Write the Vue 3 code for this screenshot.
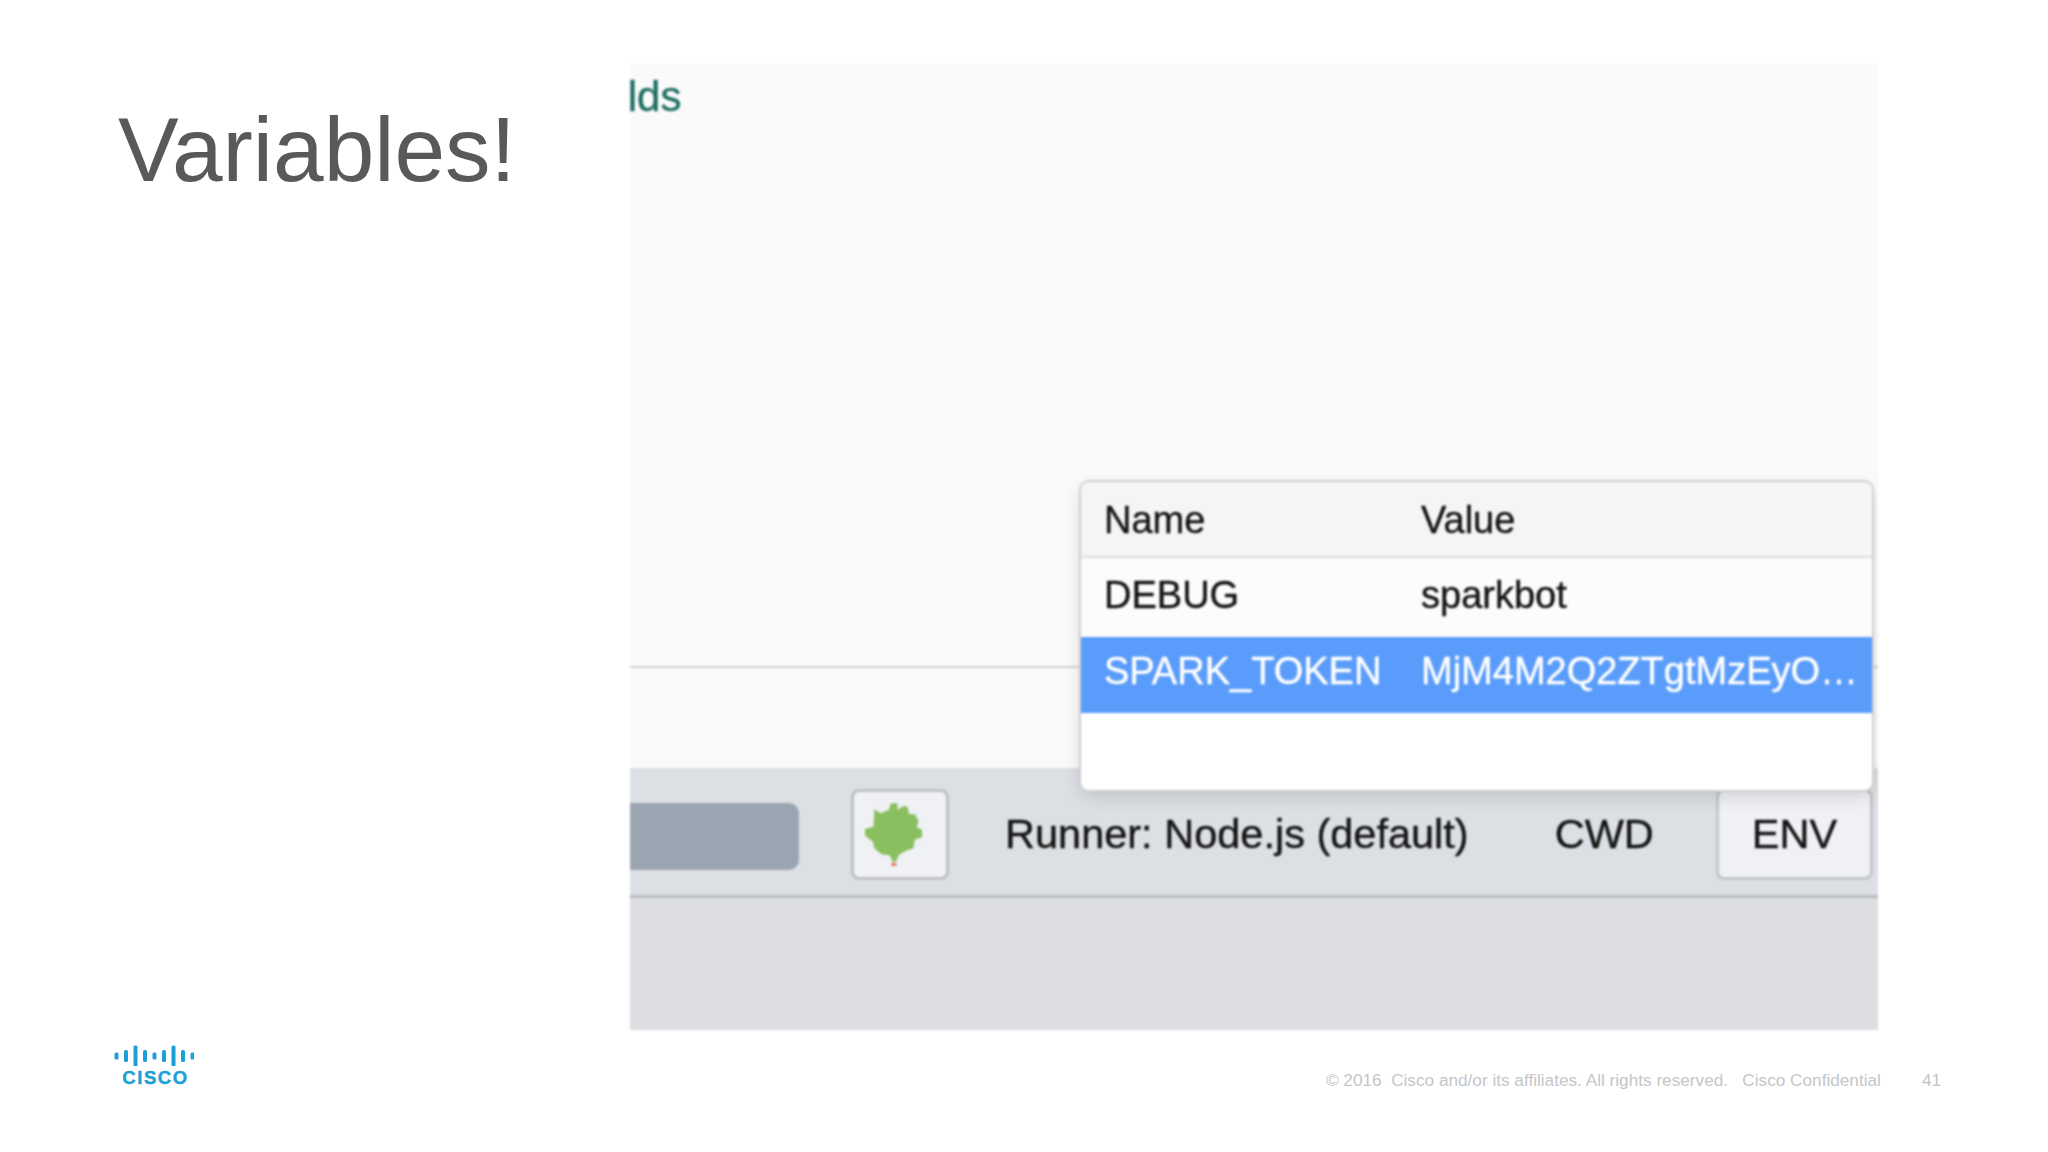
<template>
  <div class="slide">
    <div class="slide__side">
      <h1 class="slide__title">Variables!</h1>
    </div>

    <div class="shot">
      <div class="shot__log">
        <span class="shot__builds">Builds</span>
      </div>
      <div class="shot__spacer"></div>

      <div class="toolbar">
        <div class="toolbar__progress"></div>
        <button class="toolbar__tree" type="button" aria-label="Tree">
          <svg class="tree" viewBox="78 70 172 192" aria-hidden="true">
            <polygon
              fill="#8abf60"
              points="156,70 176,70 176,90 196,78 208,82 210,102 230,104 240,126 234,142 252,152 252,172 228,180 224,206 200,214 180,226 172,246 160,246 154,228 128,224 106,206 102,186 78,168 78,148 104,140 106,88 126,100 150,90"
            />
            <rect x="157" y="250" width="16" height="9" fill="#e0775a" />
          </svg>
        </button>
        <span class="toolbar__runner">Runner: Node.js (default)</span>
        <span class="toolbar__cwd">CWD</span>
        <button class="toolbar__env" type="button">ENV</button>
      </div>
      <div class="shot__bottom"></div>

      <div class="popup">
        <div class="popup__row popup__row--head">
          <span>Name</span>
          <span>Value</span>
        </div>
        <div
          v-for="row in envVars"
          :key="row.name"
          :class="['popup__row', { 'popup__row--active': row.active }]"
        >
          <span>{{ row.name }}</span>
          <span>{{ row.value }}</span>
        </div>
      </div>
    </div>

    <div class="slide__rest"></div>

    <footer class="footer">
      <div class="logo">
        <svg class="logo__bars" viewBox="0 0 80 22" aria-hidden="true">
          <rect
            v-for="(bar, i) in logoBars"
            :key="i"
            :x="i * 9.5 + 0.5"
            :y="12 - bar / 2"
            width="4"
            :height="bar"
            rx="1.5"
            fill="#1ba0d7"
          />
        </svg>
        <span class="logo__word">CISCO</span>
      </div>
      <div class="footer__legal">
        <span>© 2016&nbsp; Cisco and/or its affiliates. All rights reserved. &nbsp; Cisco Confidential</span>
        <span class="footer__page">41</span>
      </div>
    </footer>
  </div>
</template>

<script setup>
const envVars = [
  { name: 'DEBUG', value: 'sparkbot' },
  { name: 'SPARK_TOKEN', value: 'MjM4M2Q2ZTgtMzEyO…', active: true },
];

const logoBars = [7, 12, 21, 12, 7, 12, 21, 12, 7];
</script>

<style>
html,
body {
  margin: 0;
  background: #fff;
}
</style>

<style scoped>
.slide {
  width: 2048px;
  height: 1152px;
  padding-top: 64px;
  box-sizing: border-box;
  display: grid;
  grid-template-columns: 630px 1248px 1fr;
  grid-template-rows: 966px 1fr;
  overflow: hidden;
  background: #fff;
  font-family: 'Liberation Sans', Arial, sans-serif;
}

.slide__side {
  padding: 33px 0 0 118px;
}

.slide__title {
  margin: 0;
  font-size: 91px;
  line-height: 105px;
  font-weight: 400;
  color: #58595b;
}

.shot {
  position: relative;
  display: flex;
  flex-direction: column;
  overflow: hidden;
  background: #fbfafb;
  color: #141414;
  filter: blur(0.9px);
  -webkit-text-stroke: 0.4px currentColor;
}

.shot__log {
  height: 602px;
  flex: none;
  overflow: hidden;
  border-bottom: 2px solid #d4d3d3;
}

.shot__builds {
  display: block;
  margin: 11px 0 0 -63px;
  font-size: 42px;
  line-height: 44px;
  color: #1f6f62;
}

.shot__spacer {
  flex: 1;
}

.toolbar {
  height: 127px;
  flex: none;
  display: flex;
  align-items: center;
  background: #dcdfe3;
  border-bottom: 3px solid #b9bcc0;
  font-size: 41.5px;
}

.toolbar__progress {
  width: 169px;
  height: 67px;
  margin-top: 10px;
  background: #9ba5b1;
  border-radius: 0 10px 10px 0;
}

.toolbar__tree {
  width: 98px;
  height: 91px;
  margin: 5px 0 0 52px;
  padding: 0;
  box-sizing: border-box;
  display: flex;
  align-items: center;
  justify-content: center;
  background: #eff1f4;
  border: 3px solid #bfc1c5;
  border-radius: 8px;
}

.tree {
  display: block;
  width: 57px;
  height: 64px;
  margin: 2px 0 0 -13px;
}

.toolbar__runner {
  margin: 5px 0 0 56px;
}

.toolbar__cwd {
  margin: 5px 0 0 86px;
}

.toolbar__env {
  width: 157px;
  height: 91px;
  margin: 5px 5px 0 auto;
  padding: 0;
  box-sizing: border-box;
  background: #eff1f4;
  border: 3px solid #c3c5c9;
  border-radius: 8px;
  color: #141414;
  font: inherit;
  -webkit-text-stroke: 0.4px currentColor;
}

.shot__bottom {
  height: 132px;
  flex: none;
  background: #dcdee2;
}

.popup {
  position: absolute;
  top: 418px;
  right: 6px;
  width: 791px;
  height: 308px;
  border-radius: 8px;
  overflow: hidden;
  background: #fff;
  box-shadow: 0 0 0 2px #cfcfd0, 0 6px 18px rgba(0, 0, 0, 0.14);
  font-size: 38px;
}

.popup__row {
  display: grid;
  grid-template-columns: 317px 1fr;
  align-items: center;
  height: 79px;
  padding: 0 0 5px 23px;
  box-sizing: border-box;
  background: #fdfcfc;
  white-space: nowrap;
}

.popup__row--head {
  height: 76px;
  padding: 2px 0 0 23px;
  background: #f6f5f6;
  border-bottom: 2px solid #dededf;
}

.popup__row--active {
  height: 76px;
  padding-bottom: 8px;
  background: #5a9cfb;
  color: #fff;
}

.slide__rest {
  grid-column: 3;
}

.footer {
  grid-column: 1 / -1;
  display: flex;
  justify-content: space-between;
  align-items: flex-start;
  padding: 14px 107px 0 114px;
}

.logo {
  width: 80px;
  display: flex;
  flex-direction: column;
  align-items: center;
}

.logo__bars {
  display: block;
  width: 80px;
  height: 22px;
}

.logo__word {
  margin: 3px 0 0 3px;
  font-size: 18.5px;
  line-height: 18px;
  font-weight: 700;
  letter-spacing: 1.6px;
  color: #1ba0d7;
  -webkit-text-stroke: 0.4px #1ba0d7;
}

.footer__legal {
  display: flex;
  gap: 41px;
  margin-top: 26px;
  font-size: 17.2px;
  line-height: 20px;
  color: #c4c6c8;
  white-space: nowrap;
}
</style>
